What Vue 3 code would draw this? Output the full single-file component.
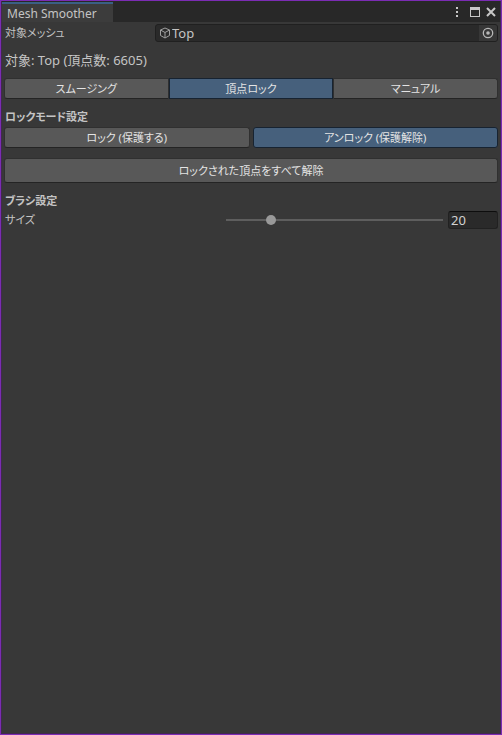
<script setup>
import { ref } from 'vue'

const target = ref('Top')
const vertexCount = ref(6605)
const size = ref(20)

const tabs = ['スムージング', '頂点ロック', 'マニュアル']
const activeTab = ref(1)

const modes = ['ロック (保護する)', 'アンロック (保護解除)']
const activeMode = ref(1)
</script>

<template>
  <main class="window">
    <header class="titlebar">
      <h1 class="title">Mesh Smoother</h1>
      <div class="window-actions">
        <button class="icon-button" type="button" aria-label="Menu">
          <svg width="4" height="12" viewBox="0 0 4 12" fill="#c8c8c8">
            <rect x="1" y="1" width="2" height="2" />
            <rect x="1" y="5" width="2" height="2" />
            <rect x="1" y="9" width="2" height="2" />
          </svg>
        </button>
        <button class="icon-button" type="button" aria-label="Maximize">
          <svg width="10" height="10" viewBox="0 0 10 10">
            <path d="M0 0H10V10H0ZM1 3V9H9V3Z" fill="#c8c8c8" fill-rule="evenodd" />
          </svg>
        </button>
        <button class="icon-button" type="button" aria-label="Close">
          <svg width="10" height="10" viewBox="0 0 10 10">
            <path d="M1 1L9 9M9 1L1 9" stroke="#c8c8c8" stroke-width="2" />
          </svg>
        </button>
      </div>
    </header>

    <div class="content">
      <div class="object-row">
        <label class="label" for="target">対象メッシュ</label>
        <div class="object-field">
          <svg width="12" height="12" viewBox="0 0 12 12" fill="none" stroke="#a0a0a0">
            <path d="M6 1L10.5 3V8.5L6 11L1.5 8.5V3ZM1.5 3L6 5.5L10.5 3M6 5.5V11" />
          </svg>
          <input id="target" class="object-name" type="text" readonly :value="target" />
          <button class="picker" type="button" aria-label="Select object">
            <svg width="12" height="12" viewBox="0 0 12 12">
              <circle cx="6" cy="6" r="4.7" fill="none" stroke="#b8b8b8" stroke-width="1.3" />
              <circle cx="6" cy="6" r="1.8" fill="#b8b8b8" />
            </svg>
          </button>
        </div>
      </div>

      <p class="info">対象: {{ target }} (頂点数: {{ vertexCount }})</p>

      <div class="tabs">
        <button
          v-for="(tab, i) in tabs"
          :key="tab"
          type="button"
          class="button"
          :class="{ active: i === activeTab }"
          :aria-pressed="i === activeTab"
          @click="activeTab = i"
        >{{ tab }}</button>
      </div>

      <section class="section">
        <h2 class="heading">ロックモード設定</h2>
        <div class="modes">
          <button
            v-for="(mode, i) in modes"
            :key="mode"
            type="button"
            class="button"
            :class="{ active: i === activeMode }"
            :aria-pressed="i === activeMode"
            @click="activeMode = i"
          >{{ mode }}</button>
        </div>
        <button class="button wide" type="button">ロックされた頂点をすべて解除</button>
      </section>

      <section class="section">
        <h2 class="heading">ブラシ設定</h2>
        <div class="size-row">
          <label class="label" for="size">サイズ</label>
          <input id="size" v-model.number="size" class="slider" type="range" min="1" max="100" />
          <input v-model.number="size" class="number" type="text" aria-label="サイズ" />
        </div>
      </section>
    </div>
  </main>
</template>

<style>
body {
  background: #383838;
}
</style>

<style scoped>
.window {
  box-sizing: border-box;
  min-height: 100vh;
  border: 1px solid #7b2cb4;
  box-shadow: inset 0 0 0 1px #41294e;
  background: #383838;
  color: #c4c4c4;
  font: 13px/18px "Noto Sans", "Noto Sans CJK JP", sans-serif;
  font-feature-settings: "palt";
}

button,
input {
  box-sizing: border-box;
  min-width: 0;
  margin: 0;
  padding: 0;
  border: 0;
  color: inherit;
  font: inherit;
  font-feature-settings: inherit;
}

.titlebar {
  display: flex;
  align-items: stretch;
  justify-content: space-between;
  height: 21px;
  margin: 0 1px;
  padding-top: 1px;
  box-sizing: border-box;
  background: #282828;
}

.title {
  box-sizing: border-box;
  margin: 0;
  padding: 0 16px 0 5px;
  border-top: 2px solid #3a5f85;
  background: #3c3c3c;
  font-size: 12px;
  font-weight: 400;
  line-height: 20px;
}

.window-actions {
  display: flex;
  align-items: center;
  gap: 6px;
  padding-right: 4px;
}

.icon-button {
  display: flex;
  align-items: center;
  background: none;
}

.icon-button:first-child {
  margin-right: 5px;
}

.content {
  padding: 2px 3px;
}

.label,
.heading,
.info {
  padding-left: 1px;
}

.label,
.heading,
.button {
  font-size: 11px;
}

.object-row {
  display: grid;
  grid-template-columns: 151px 1fr;
}

.object-field {
  display: flex;
  align-items: center;
  height: 18px;
  box-sizing: border-box;
  padding-left: 3px;
  border: 1px solid #202020;
  border-radius: 3px;
  background: #2a2a2a;
  overflow: hidden;
}

.object-name {
  flex: 1;
  height: 16px;
  padding-left: 1px;
  background: transparent;
}

.picker {
  display: flex;
  align-items: center;
  justify-content: center;
  width: 18px;
  height: 16px;
  background: #373737;
}

.info {
  margin: 9px 0;
}

.tabs,
.modes {
  display: grid;
  grid-auto-flow: column;
  grid-auto-columns: 1fr;
}

.modes {
  gap: 3px;
}

.button {
  height: 21px;
  border: 1px solid #303030;
  border-bottom-color: #242424;
  border-radius: 3px;
  background: #585858;
  color: #e4e4e4;
  line-height: 18px;
}

.active {
  border-color: #172331;
  background: #46607c;
}

.tabs .button {
  border-radius: 0;
}

.tabs .button:first-child {
  border-radius: 3px 0 0 3px;
}

.tabs .button:last-child {
  border-radius: 0 3px 3px 0;
}

.section {
  margin-top: 8px;
}

.heading {
  margin: 0;
  font-weight: 700;
  line-height: 20px;
}

.wide {
  width: 100%;
  height: 25px;
  margin-top: 10px;
}

.size-row {
  display: grid;
  grid-template-columns: 217px 1fr 50px;
  align-items: center;
  column-gap: 5px;
}

.slider {
  width: 100%;
  height: 18px;
  appearance: none;
  background: transparent;
}

.slider::-webkit-slider-runnable-track {
  height: 2px;
  background: #5e5e5e;
}

.slider::-webkit-slider-thumb {
  appearance: none;
  width: 10px;
  height: 10px;
  margin-top: -4px;
  border-radius: 50%;
  background: #999999;
}

.number {
  width: 100%;
  height: 18px;
  padding: 0 2px;
  border: 1px solid #212121;
  border-top-color: #0d0d0d;
  border-radius: 3px;
  background: #2a2a2a;
  color: #d2d2d2;
}
</style>
